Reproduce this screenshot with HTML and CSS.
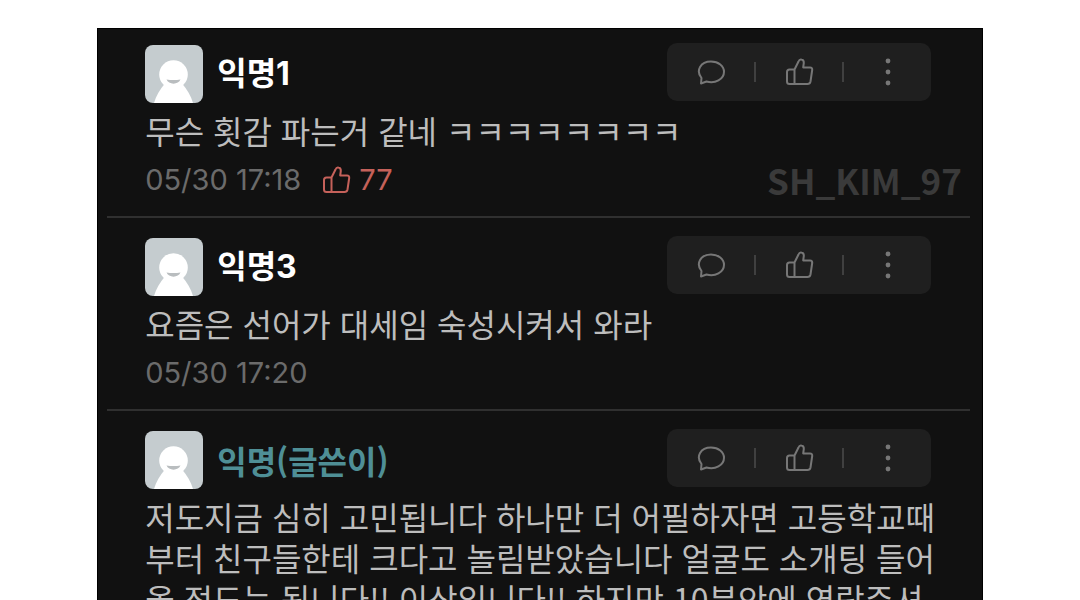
FILE: index.html
```html
<!DOCTYPE html>
<html lang="ko">
<head>
<meta charset="utf-8">
<meta name="viewport" content="width=device-width, initial-scale=1">
<title>댓글</title>
<link rel="stylesheet" href="styles.css">
</head>
<body>
<svg class="sprite" aria-hidden="true">
  <symbol id="avatar" viewBox="0 0 58 58">
    <rect width="58" height="58" fill="#c5cccf"/>
    <circle cx="28.500" cy="29.500" r="14.300" fill="#fff"/>
    <path d="M9 58C11 51 15 44 20 38.500H37C42 44 46 51 48 58Z" fill="#fff"/>
    <path d="M21.500 34.500Q28.500 35.500 35.500 34.500C33.500 40 23.500 40 21.500 34.500Z" fill="#b9bdbf"/>
  </symbol>
  <symbol id="bubble" viewBox="0 0 30 30">
    <path d="M5.500 21C-0.500 13.500 4.500 4.500 15 4.500C22.500 4.500 28 9 28 14.800C28 22.500 19 27 10.500 24.500L5 26.500Z"/>
  </symbol>
  <symbol id="thumb" viewBox="0 0 30 30">
    <path d="M10.500 12.500L14.500 4.500Q15.500 2 17.500 2.500Q20 3 19.800 6L19.200 10.500H26Q28.500 10.500 28.200 13L26.500 24.500Q26 27 23.500 27H10.500M10.500 12.500H5.500Q3 12.500 3 15V24.500Q3 27 5.500 27H10.500ZM10.500 12.500V27"/>
  </symbol>
  <symbol id="more" viewBox="0 0 30 30">
    <g fill="currentColor" stroke="none"><circle cx="16" cy="4" r="2.400"/><circle cx="16" cy="15" r="2.400"/><circle cx="16" cy="26" r="2.400"/></g>
  </symbol>
</svg>
<main class="board">
  <article class="comment">
    <header class="head">
      <div class="author"><svg class="avatar" aria-hidden="true"><use href="#avatar"/></svg><h2 class="name">익명1</h2></div>
      <div class="tools">
        <button class="tool" type="button" aria-label="답글"><svg class="icon"><use href="#bubble"/></svg></button>
        <button class="tool" type="button" aria-label="공감"><svg class="icon"><use href="#thumb"/></svg></button>
        <button class="tool" type="button" aria-label="더보기"><svg class="icon"><use href="#more"/></svg></button>
      </div>
    </header>
    <p class="text">무슨 횟감 파는거 같네 ㅋㅋㅋㅋㅋㅋㅋㅋ</p>
    <div class="meta">
      <time>05/30 17:18</time>
      <span class="likes"><svg class="icon" aria-hidden="true"><use href="#thumb"/></svg>77</span>
      <span class="mark">SH_KIM_97</span>
    </div>
  </article>
  <article class="comment">
    <header class="head">
      <div class="author"><svg class="avatar" aria-hidden="true"><use href="#avatar"/></svg><h2 class="name">익명3</h2></div>
      <div class="tools">
        <button class="tool" type="button" aria-label="답글"><svg class="icon"><use href="#bubble"/></svg></button>
        <button class="tool" type="button" aria-label="공감"><svg class="icon"><use href="#thumb"/></svg></button>
        <button class="tool" type="button" aria-label="더보기"><svg class="icon"><use href="#more"/></svg></button>
      </div>
    </header>
    <p class="text">요즘은 선어가 대세임 숙성시켜서 와라</p>
    <div class="meta"><time>05/30 17:20</time></div>
  </article>
  <article class="comment">
    <header class="head">
      <div class="author"><svg class="avatar" aria-hidden="true"><use href="#avatar"/></svg><h2 class="name writer">익명(글쓴이)</h2></div>
      <div class="tools">
        <button class="tool" type="button" aria-label="답글"><svg class="icon"><use href="#bubble"/></svg></button>
        <button class="tool" type="button" aria-label="공감"><svg class="icon"><use href="#thumb"/></svg></button>
        <button class="tool" type="button" aria-label="더보기"><svg class="icon"><use href="#more"/></svg></button>
      </div>
    </header>
    <p class="text">저도지금 심히 고민됩니다 하나만 더 어필하자면 고등학교때부터 친구들한테 크다고 놀림받았습니다 얼굴도 소개팅 들어올 정도는 됩니다!! 이상입니다!! 하지만 10분안에 연락주셔</p>
  </article>
</main>
</body>
</html>
```
FILE: styles.css
```css
* { box-sizing: border-box; }
body {
  margin: 0;
  height: 100vh;
  overflow: hidden;
  background: #fff;
  font-family: "Noto Sans CJK KR", sans-serif;
}
.sprite { display: none; }
.board {
  margin: 28px 9% 0;
  padding: 1px 13px 0 10px;
  min-height: calc(100vh - 28px);
  background: #111;
  box-shadow: inset 0 0 0 1px #000;
}
.comment {
  padding: 18px 39px 20px 38px;
  border-bottom: 2px solid #303030;
}
.comment:first-child { padding-top: 14px; }
.comment:last-child { border-bottom: 0; }
.head {
  display: flex;
  justify-content: space-between;
  height: 60px;
}
.author {
  display: flex;
  align-items: flex-start;
  align-self: flex-end;
  gap: 14px;
}
.avatar { width: 58px; height: 58px; border-radius: 8px; }
.name {
  margin: 0;
  color: #fff;
  font-family: Inter, "Noto Sans CJK KR", sans-serif;
  font-size: 32px;
  line-height: 58px;
  font-weight: 700;
}
.writer {
  color: #4f8f96;
  font-family: "Noto Sans CJK KR", sans-serif;
}
.tools {
  display: flex;
  width: 264px;
  height: 58px;
  background: #1f1f1f;
  border-radius: 10px;
}
.tool {
  position: relative;
  flex: 1;
  display: flex;
  align-items: center;
  justify-content: center;
  padding: 0;
  border: 0;
  background: none;
  color: #777;
}
.tool + .tool::before {
  content: "";
  position: absolute;
  left: -1px;
  top: 19px;
  width: 2px;
  height: 20px;
  background: #404040;
}
.icon {
  width: 30px;
  height: 30px;
  fill: none;
  stroke: currentColor;
  stroke-width: 2;
  stroke-linejoin: round;
}
.text {
  margin: 7px -12px 0 0;
  color: #bdbdbd;
  font-size: 32px;
  line-height: 41px;
  font-weight: 400;
}
.meta {
  display: flex;
  align-items: center;
  gap: 20px;
  height: 32px;
  margin-top: 13px;
  color: #6b6b6b;
  font-family: Inter, sans-serif;
  font-size: 29px;
  line-height: 32px;
}
.likes {
  display: flex;
  align-items: center;
  gap: 8px;
  color: #c5615a;
}
.mark {
  margin: 0 -31px 0 auto;
  color: #3a3a3a;
  font-family: "Noto Sans CJK KR", sans-serif;
  font-size: 35px;
  font-weight: 700;
}
```
